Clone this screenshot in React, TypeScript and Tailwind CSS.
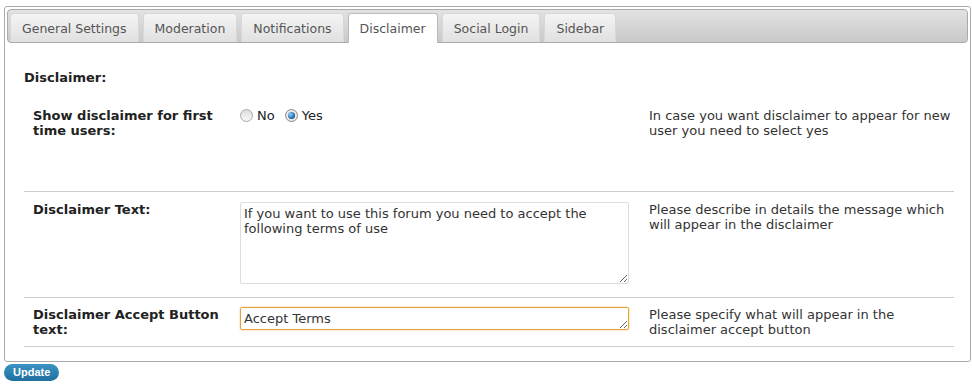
import React, { useState } from 'react';

const tabs = ['General Settings', 'Moderation', 'Notifications', 'Disclaimer', 'Social Login', 'Sidebar'];

const Radio: React.FC<{ checked: boolean; label: string; onClick: () => void }> = ({ checked, label, onClick }) => (
  <label className="flex items-center gap-[4px] cursor-pointer" onClick={onClick}>
    {checked ? (
      <span className="w-[13px] h-[13px] rounded-full border border-[#8a8a8a] bg-[#e8e8e8] flex items-center justify-center">
        <span className="w-[7px] h-[7px] rounded-full bg-[radial-gradient(circle_at_35%_35%,#8fd0ff,#1a5f9e_70%,#0b3d6b)]" />
      </span>
    ) : (
      <span className="w-[13px] h-[13px] rounded-full border border-[#a8a8a8] bg-[linear-gradient(#dcdcdc,#f8f8f8)]" />
    )}
    <span>{label}</span>
  </label>
);

export default function App() {
  const [active, setActive] = useState('Disclaimer');
  const [show, setShow] = useState(true);

  return (
    <div className="w-[972px] h-[387px] bg-white text-[13px] leading-[15px] text-[#222] font-['DejaVu_Sans',Verdana,sans-serif] pt-[6px] pl-[4px]">
      <div className="w-[967px] h-[356px] border border-[#aaa] rounded-[3px] p-[2px]">
        <div className="h-[34px] border border-[#aaa] rounded-[4px] bg-[linear-gradient(#e2e2e2,#c9c9c9)] flex items-end gap-[4px] pl-[2px]">
          {tabs.map(t => (
            <button
              key={t}
              onClick={() => setActive(t)}
              className={`h-[29px] px-[11px] rounded-t-[3px] border border-b-0 text-[12.5px] text-[#555] ${
                t === active
                  ? 'bg-white border-[#bbb] text-[#222] h-[30px] -mb-px'
                  : 'bg-[linear-gradient(#f4f4f4,#e0e0e0)] border-[#d8d8d8]'
              }`}
            >
              {t}
            </button>
          ))}
        </div>

        <div className="pl-[17px] pr-[14px]">
          <div className="font-bold mt-[27px] text-[#222]">Disclaimer:</div>

          <div className="flex h-[107px] pt-[23px] border-b border-[#ccc]">
            <div className="w-[216px] pl-[9px] font-bold">Show disclaimer for first time users:</div>
            <div className="w-[409px] flex gap-[10px] items-start">
              <Radio checked={!show} label="No" onClick={() => setShow(false)} />
              <Radio checked={show} label="Yes" onClick={() => setShow(true)} />
            </div>
            <div className="w-[304px] text-[#333]">In case you want disclaimer to appear for new user you need to select yes</div>
          </div>

          <div className="flex h-[106px] pt-[10px] border-b border-[#ccc]">
            <div className="w-[216px] pl-[9px] font-bold">Disclaimer Text:</div>
            <div className="w-[409px]">
              <textarea
                defaultValue="If you want to use this forum you need to accept the following terms of use"
                className="w-[389px] h-[82px] border border-[#ddd] rounded-[2px] px-[3px] py-[3px] text-[#333] leading-[15px] outline-none"
              />
            </div>
            <div className="w-[304px] text-[#333]">Please describe in details the message which will appear in the disclaimer</div>
          </div>

          <div className="flex h-[49px] pt-[9px] border-b border-[#ccc]">
            <div className="w-[216px] pl-[9px] font-bold">Disclaimer Accept Button text:</div>
            <div className="w-[409px]">
              <textarea
                rows={1}
                defaultValue="Accept Terms"
                className="w-[389px] h-[23px] border border-[#e4a43c] rounded-[2px] px-[3px] py-[3px] text-[#333] leading-[15px] outline-none shadow-[0_0_2px_#f0c070]"
              />
            </div>
            <div className="w-[304px] text-[#333]">Please specify what will appear in the disclaimer accept button</div>
          </div>
        </div>
      </div>

      <button className="mt-[2px] h-[17px] px-[9px] rounded-full bg-[linear-gradient(#3b93c4,#1f6f9f)] text-white text-[11px] font-bold leading-[17px] font-['Liberation_Sans',Arial,sans-serif]">
        Update
      </button>
    </div>
  );
}
